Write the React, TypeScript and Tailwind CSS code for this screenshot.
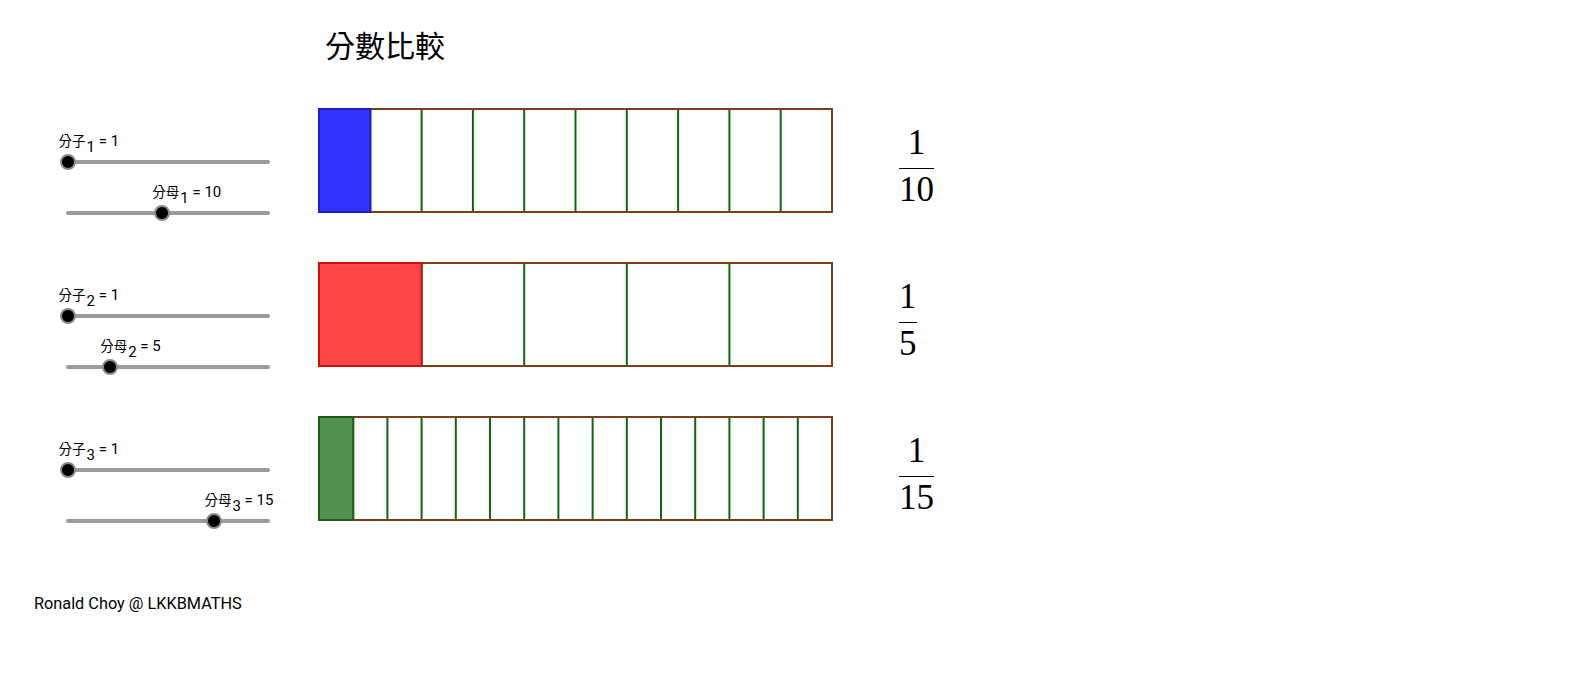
import React from "react";

const BROWN = "#7a3f17";
const GREEN_LINE = "#0a6a0a";

type Row = {
  idx: number;
  num: number;
  den: number;
  fill: string;
  stroke: string;
};

const rows: Row[] = [
  { idx: 1, num: 1, den: 10, fill: "#3333ff", stroke: "#1f1fc0" },
  { idx: 2, num: 1, den: 5, fill: "#ff4747", stroke: "#cc1010" },
  { idx: 3, num: 1, den: 15, fill: "#4f934f", stroke: "#225a1e" },
];

const COL_LEFT = 57;

function knobCenter(v: number, max: number) {
  return 68 + ((v - 1) / (max - 1)) * 198;
}

function Slider({ name, idx, value, max }: { name: string; idx: number; value: number; max: number }) {
  const cx = knobCenter(value, max);
  return (
    <div className="w-[230px]">
      <div
        className="h-[21px] leading-[20px] whitespace-nowrap text-black"
        style={{ paddingLeft: cx - 9.5 - COL_LEFT }}
      >
        <span className="text-[13.5px]" style={{ fontFamily: '"Noto Sans CJK TC", sans-serif' }}>
          {name}
        </span>
        <span
          className="text-[15px] inline-block leading-none align-[-6px] pl-[1px]"
          style={{ fontFamily: "Roboto, sans-serif" }}
        >
          {idx}
        </span>
        <span className="text-[15px]" style={{ fontFamily: "Roboto, sans-serif" }}>
          {" "}= {value}
        </span>
      </div>
      <div className="relative h-[22px] flex items-center">
        <div className="ml-[9px] w-[204px] h-[4px] rounded-full bg-[#9a9a9a]" />
        <div
          className="absolute top-1/2 -translate-y-1/2 w-[16px] h-[16px] rounded-full bg-black border-[2.5px] border-[#8a8a8a]"
          style={{ left: cx - COL_LEFT - 8 }}
        />
      </div>
    </div>
  );
}

function Bar({ den, fill, stroke }: { den: number; fill: string; stroke: string }) {
  const W = 513;
  const H = 103;
  const seg = W / den;
  const lines = [];
  for (let k = 1; k < den; k++) {
    const x = 2 + k * seg;
    lines.push(<line key={k} x1={x} y1={2} x2={x} y2={2 + H} stroke={GREEN_LINE} strokeWidth={2} />);
  }
  return (
    <svg width={517} height={107} className="block -mt-[1px] shrink-0">
      {lines}
      <rect x={2} y={2} width={W} height={H} fill="none" stroke={BROWN} strokeWidth={2} />
      <rect x={2} y={2} width={seg} height={H} fill={fill} stroke={stroke} strokeWidth={2} />
    </svg>
  );
}

function Fraction({ num, den }: { num: number; den: number }) {
  return (
    <div
      className="inline-flex flex-col items-center text-black text-[35px]"
      style={{ fontFamily: '"Liberation Serif", serif' }}
    >
      <div className="leading-[36px] h-[36px]">{num}</div>
      <div className="self-stretch h-[1.6px] bg-black mt-[6.5px]" />
      <div className="leading-[36px] h-[36px] mt-[3px]">{den}</div>
    </div>
  );
}

export default function App() {
  return (
    <div className="w-full h-screen bg-white overflow-hidden">
      <div
        className="pt-[29px] pl-[325px] h-[59px] text-[30px] leading-[30px] text-black"
        style={{ fontFamily: '"Noto Sans CJK TC", sans-serif' }}
      >
        分數比較
      </div>
      <div className="mt-[49px] flex flex-col gap-[50px]">
        {rows.map((r) => (
          <div key={r.idx} className="flex h-[104px] items-start">
            <div className="w-[260px] ml-[57px] pt-[22px] flex flex-col gap-[8px] shrink-0">
              <Slider name="分子" idx={r.idx} value={r.num} max={20} />
              <Slider name="分母" idx={r.idx} value={r.den} max={20} />
            </div>
            <Bar den={r.den} fill={r.fill} stroke={r.stroke} />
            <div className="ml-[65px] pt-[17px]">
              <Fraction num={r.num} den={r.den} />
            </div>
          </div>
        ))}
      </div>
      <div
        className="mt-[74px] pl-[34px] text-[16.3px] leading-[20px] text-black"
        style={{ fontFamily: "Roboto, sans-serif" }}
      >
        Ronald Choy @ LKKBMATHS
      </div>
    </div>
  );
}
